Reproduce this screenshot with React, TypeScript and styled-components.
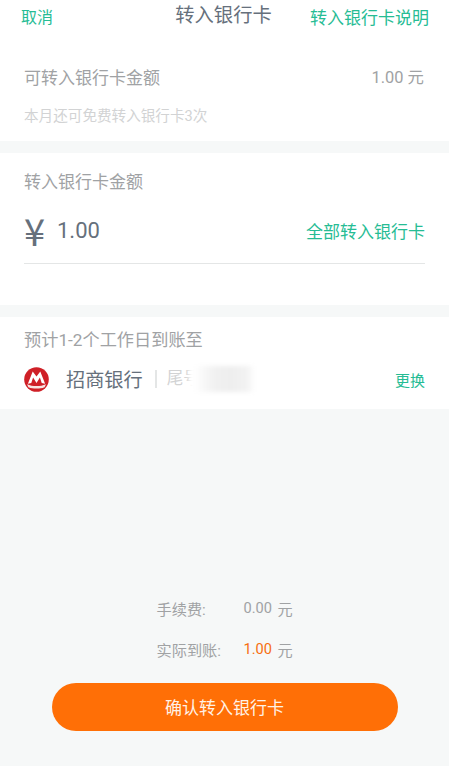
import styled, { createGlobalStyle } from "styled-components";

const colors = {
  green: "#26bc94",
  orange: "#ff6f06",
  page: "#f6f8f8",
  title: "#66707c",
  label: "#a0a2a4",
  hint: "#d2d3d4",
  line: "#e4e6e6",
};

const GlobalStyle = createGlobalStyle`
  html, body {
    margin: 0;
    padding: 0;
    background: ${colors.page};
  }
  * {
    box-sizing: border-box;
  }
  body {
    font-family: Roboto, "Noto Sans CJK SC", sans-serif;
  }
`;

const Page = styled.div`
  width: 449px;
  height: 766px;
  overflow: hidden;
  display: flex;
  flex-direction: column;
  background: ${colors.page};
`;

const Section = styled.section<{ $height: number; $gap?: boolean }>`
  height: ${(p) => p.$height}px;
  margin-bottom: ${(p) => (p.$gap ? 12 : 0)}px;
  background: #fff;
`;

const NavBar = styled.div`
  height: 35px;
  padding: 0 20px 0 21px;
  display: flex;
  justify-content: space-between;
  align-items: flex-start;
`;

const NavLink = styled.span`
  margin-top: 6px;
  font-size: 17px;
  line-height: 24px;
  color: ${colors.green};
`;

const Cancel = styled(NavLink)`
  font-size: 16px;
`;

const NavTitle = styled.span`
  margin: 4px 0 0 84px;
  font-size: 19.3px;
  line-height: 24px;
  color: ${colors.title};
`;

const Row = styled.div`
  padding: 0 24px;
  display: flex;
  justify-content: space-between;
  align-items: center;
`;

const BalanceRow = styled(Row)`
  margin-top: 31px;
  height: 24px;
`;

const Label = styled.span`
  font-size: 17px;
  line-height: 24px;
  color: ${colors.label};
`;

const BalanceValue = styled(Label)`
  margin-right: 1px;
  font-size: 16.4px;
`;

const Hint = styled.div`
  margin: 16px 0 0 24px;
  font-size: 14.6px;
  line-height: 20px;
  color: ${colors.hint};
`;

const AmountHeading = styled(Label)`
  display: block;
  padding: 17px 24px 0;
`;

const AmountRow = styled(Row)`
  margin-top: 13px;
  height: 46px;
  justify-content: flex-start;
`;

const Yen = styled.span`
  flex: 0 0 33px;
  font-family: "Noto Sans CJK SC", sans-serif;
  font-size: 38px;
  line-height: 44px;
  color: ${colors.title};
`;

const Amount = styled.span`
  flex: 1;
  padding-top: 1px;
  font-size: 22px;
  line-height: 46px;
  color: ${colors.title};
`;

const ActionLink = styled.span<{ $size: number }>`
  font-size: ${(p) => p.$size}px;
  color: ${colors.green};
`;

const Divider = styled.div`
  height: 1px;
  margin: 10px 24px 0;
  background: ${colors.line};
`;

const ArrivalHeading = styled(Label)`
  display: block;
  padding: 11px 24px 0;
  font-size: 17.2px;
`;

const BankRow = styled(Row)`
  margin-top: 12px;
  height: 30px;
  justify-content: flex-start;
`;

const BankName = styled.span`
  margin-left: 17px;
  font-size: 19.2px;
  color: ${colors.title};
`;

const TailNumber = styled.span`
  position: relative;
  flex: 1;
  margin-left: 12px;
  padding-left: 10px;
  font-size: 16.5px;
  line-height: 18px;
  color: ${colors.hint};
  border-left: 2px solid ${colors.line};
`;

const Smudge = styled.span`
  position: absolute;
  left: 32px;
  top: -4px;
  width: 66px;
  height: 26px;
  background: linear-gradient(
    90deg,
    #fff 0%,
    #fff 8%,
    #f6f6f6 26%,
    #f0f0f0 42%,
    #eeeeee 64%,
    #f2f2f2 88%,
    #fff 100%
  );
  filter: blur(2px);
`;

const Bottom = styled.div`
  flex: 1;
  display: flex;
  flex-direction: column;
  align-items: center;
  padding-top: 187px;
`;

const FeeRow = styled.div`
  width: 136px;
  height: 23px;
  margin-bottom: 18px;
  display: grid;
  grid-template-columns: 87px 34px 1fr;
  align-items: center;
  font-size: 15.2px;
  color: ${colors.label};
`;

const FeeValue = styled.span<{ $accent?: boolean }>`
  padding-top: 1px;
  font-size: 14.6px;
  color: ${(p) => (p.$accent ? "#f66f10" : colors.label)};
`;

const ConfirmButton = styled.button`
  width: 346px;
  height: 48px;
  margin-top: 5px;
  padding: 0 0 2px;
  border: 0;
  border-radius: 24px;
  background: ${colors.orange};
  color: #fff2e6;
  font-family: inherit;
  font-size: 17px;
`;

const CmbLogo = () => (
  <svg width="25" height="25" viewBox="0 0 25 25" aria-hidden="true">
    <circle cx="12.5" cy="12.500" r="12.300" fill="#cf2027" />
    <path
      d="M3 17.200c3 1.300 6 1.800 9.500 1.800s6.500-0.500 9.500-1.800l-1.400 3c-2.500 1-5 1.400-8.100 1.400s-5.600-0.400-8.100-1.400z"
      fill="#f8e4e2"
    />
    <path
      d="M3.900 16.700 8.700 4.600l3.800 5 3.800-5 4.800 12.100-3.400-0.700-1.800-5.400-3.400 5.400-3.400-5.400-1.800 5.400z"
      fill="#fff"
    />
  </svg>
);

export default function App() {
  return (
    <Page>
      <GlobalStyle />
      <Section $height={141} $gap>
        <NavBar>
          <Cancel>取消</Cancel>
          <NavTitle>转入银行卡</NavTitle>
          <NavLink>转入银行卡说明</NavLink>
        </NavBar>
        <BalanceRow>
          <Label>可转入银行卡金额</Label>
          <BalanceValue>1.00 元</BalanceValue>
        </BalanceRow>
        <Hint>本月还可免费转入银行卡3次</Hint>
      </Section>

      <Section $height={152} $gap>
        <AmountHeading>转入银行卡金额</AmountHeading>
        <AmountRow>
          <Yen>¥</Yen>
          <Amount>1.00</Amount>
          <ActionLink $size={17}>全部转入银行卡</ActionLink>
        </AmountRow>
        <Divider />
      </Section>

      <Section $height={92}>
        <ArrivalHeading>预计1-2个工作日到账至</ArrivalHeading>
        <BankRow>
          <CmbLogo />
          <BankName>招商银行</BankName>
          <TailNumber>
            尾号
            <Smudge />
          </TailNumber>
          <ActionLink $size={15}>更换</ActionLink>
        </BankRow>
      </Section>

      <Bottom>
        <FeeRow>
          <span>手续费:</span>
          <FeeValue>0.00</FeeValue>
          <span>元</span>
        </FeeRow>
        <FeeRow>
          <span>实际到账:</span>
          <FeeValue $accent>1.00</FeeValue>
          <span>元</span>
        </FeeRow>
        <ConfirmButton>确认转入银行卡</ConfirmButton>
      </Bottom>
    </Page>
  );
}
